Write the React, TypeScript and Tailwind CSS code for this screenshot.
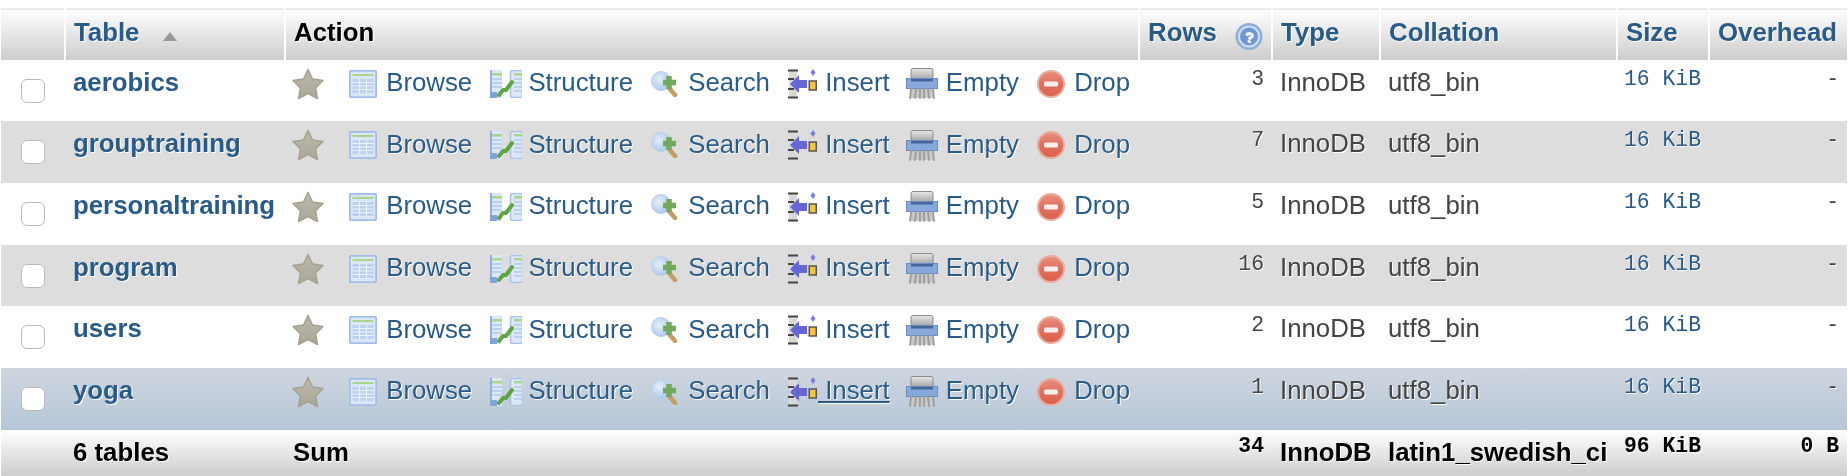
import type { ReactNode } from "react";

type TableRow = {
  name: string;
  rows: number;
};

const TABLE_ROWS: TableRow[] = [
  { name: "aerobics", rows: 3 },
  { name: "grouptraining", rows: 7 },
  { name: "personaltraining", rows: 5 },
  { name: "program", rows: 16 },
  { name: "users", rows: 2 },
  { name: "yoga", rows: 1 },
];

const StarIcon = () => (
  <svg className="h-8 w-8 shrink-0" viewBox="0 0 32 32">
    <defs>
      <linearGradient id="star-fill" x1="0" x2="0" y1="0" y2="1">
        <stop offset="0" stopColor="#bcb8aa" />
        <stop offset="1" stopColor="#aca898" />
      </linearGradient>
    </defs>
    <path
      d="M16 1.5 L20.5 11 L31 12.5 L23.5 20 L25.5 30.5 L16 25.5 L6.5 30.5 L8.5 20 L1 12.5 L11.5 11 Z"
      fill="url(#star-fill)"
      stroke="#a5a191"
      strokeLinejoin="round"
      strokeWidth="1.5"
    />
  </svg>
);

const BrowseIcon = () => (
  <svg className="h-7 w-7 shrink-0" viewBox="0 0 28 28">
    <rect fill="#dbe7f7" height="26.5" rx="2" stroke="#a3bee6" strokeWidth="2" width="26.5" x="0.75" y="0.75" />
    <rect fill="#a9d58f" height="2" width="21" x="3.5" y="4" />
    <rect fill="#bcd2ef" height="14" width="21" x="3.5" y="9" />
    <path d="M3.5 12.5h21M3.5 16h21M3.5 19.5h21M10.5 9v14M17.5 9v14" stroke="#eef4fc" strokeWidth="1.2" />
  </svg>
);

const StructureIcon = () => (
  <svg className="h-7 w-8 shrink-0" viewBox="0 0 32 28">
    <rect fill="#dde8f7" height="28" width="12" x="0" y="0" />
    <rect fill="#8fb0e0" height="28" width="2" x="0" y="0" />
    <rect fill="#a9d58f" height="2.5" width="10" x="2" y="3" />
    <path d="M2 9h10M2 13h10M2 17h10" stroke="#b3c9ea" strokeWidth="1.5" />
    <rect fill="#dde8f7" height="27" rx="2" stroke="#a9c3e8" strokeWidth="1.5" width="12" x="20.5" y="0.5" />
    <rect fill="#a9d58f" height="2.5" width="8" x="24" y="3" />
    <path d="M24 9h8M24 13h8M24 17h8M24 21h8" stroke="#b3c9ea" strokeWidth="1.5" />
    <rect fill="#7fa4dc" height="6" width="7" x="0" y="22" />
    <path d="M9 25 L13 20 L16 20 L22 12" fill="none" stroke="#5fa544" strokeLinecap="round" strokeLinejoin="round" strokeWidth="4" />
  </svg>
);

const SearchIcon = () => (
  <svg className="h-[26px] w-[27px] shrink-0" viewBox="0 0 27 26">
    <defs>
      <radialGradient id="lens-fill" cx="0.4" cy="0.4" r="0.65">
        <stop offset="0" stopColor="#e6eff9" />
        <stop offset="1" stopColor="#a9c6ea" />
      </radialGradient>
    </defs>
    <circle cx="10" cy="10" fill="url(#lens-fill)" r="9.5" stroke="#b8cfec" />
    <path d="M18 17 L24 24" stroke="#c49c66" strokeLinecap="round" strokeWidth="4.5" />
    <path d="M18 5v13M12 11.5h13" stroke="#72a95a" strokeWidth="5.5" />
  </svg>
);

const InsertIcon = () => (
  <svg className="h-[30px] w-[29px] shrink-0" viewBox="0 0 29 30">
    <rect fill="#d8d8d8" height="28" width="8" x="1" y="1" />
    <path d="M0 1.5h10M0 28.5h10M0 10h6M0 20h6" stroke="#444" strokeWidth="2" />
    <path d="M2 15 L11 6 L11 11 L19 11 L19 19 L11 19 L11 24 Z" fill="#6666d4" />
    <path d="M25 0 L27.5 3.5 L25 7 L22.5 3.5 Z" fill="#7d7de0" />
    <rect fill="#f3c44a" height="9" stroke="#555" strokeWidth="1.5" width="7" x="21.25" y="12" />
  </svg>
);

const EmptyIcon = () => (
  <svg className="h-[31px] w-8 shrink-0" viewBox="0 0 32 31">
    <defs>
      <linearGradient id="shredder-top" x1="0" x2="0" y1="0" y2="1">
        <stop offset="0" stopColor="#e8e8e8" />
        <stop offset="1" stopColor="#a2a2a2" />
      </linearGradient>
    </defs>
    <rect fill="url(#shredder-top)" height="11" rx="2" stroke="#8a8a8a" width="22" x="5" y="0.5" />
    <rect fill="#86a8da" height="10" stroke="#6a8cc2" width="31" x="0.5" y="10.5" />
    <rect fill="#456699" height="2.5" width="22" x="5" y="11" />
    <rect fill="#c8c8c8" height="9" width="24" x="4" y="21" />
    <path d="M5 21 L4 30 M10 21 L9 30 M14 21 L14 30 M18 21 L18 30 M22 21 L23 30 M27 21 L28 30" stroke="#9c9c9c" strokeLinecap="round" strokeWidth="1.8" />
  </svg>
);

const DropIcon = () => (
  <svg className="h-7 w-7 shrink-0" viewBox="0 0 28 28">
    <defs>
      <linearGradient id="drop-fill" x1="0" x2="0" y1="0" y2="1">
        <stop offset="0" stopColor="#e8907f" />
        <stop offset="0.5" stopColor="#e0705e" />
        <stop offset="1" stopColor="#dc604d" />
      </linearGradient>
    </defs>
    <circle cx="14" cy="14" fill="url(#drop-fill)" r="13" stroke="#e8ab9e" strokeWidth="2" />
    <rect fill="#f8efed" height="5" rx="1.5" width="14" x="7" y="11.5" />
  </svg>
);

const HelpIcon = () => (
  <svg className="mt-2 h-[29px] w-7 shrink-0" viewBox="0 0 28 29">
    <circle cx="14" cy="14.5" fill="#8dadda" r="13.5" />
    <circle cx="14" cy="14.5" fill="#cfddf0" r="11" />
    <circle cx="14" cy="14.5" fill="#6f98d4" r="9" />
    <text fill="#f0f4fa" fontFamily="Liberation Sans" fontSize="15" fontWeight="700" textAnchor="middle" x="14" y="20">
      ?
    </text>
  </svg>
);

const SortArrow = () => (
  <svg className="h-[9px] w-[14px] shrink-0" viewBox="0 0 14 9">
    <path d="M7 0 L14 9 L0 9 Z" fill="#999" />
  </svg>
);

const ActionLink = ({ icon, label, textOffset, hovered }: { icon: ReactNode; label: string; textOffset: string; hovered?: boolean }) => (
  <span className="flex h-9 shrink-0 items-center">
    {icon}
    <span className={`mb-[3px] leading-8 text-[#2a5a86] ${textOffset} ${hovered ? "underline" : ""}`}>{"\u00a0"}{label}</span>
  </span>
);

const HeaderCell = ({ children, dark, last }: { children: ReactNode; dark?: boolean; last?: boolean }) => (
  <th
    className={`bg-gradient-to-b from-white to-[#cccccc] px-2 pb-1 text-left align-middle font-bold leading-8 ${
      last ? "" : "border-r-2 border-white"
    } ${dark ? "text-black" : "text-[#2a5a86]"}`}
  >
    {children}
  </th>
);

const cell = "px-2 pt-[6px] align-top leading-8";
const monoCell = "px-2 pt-[9px] align-top font-['Liberation_Mono'] text-[21.4px] leading-5";

export default function App() {
  return (
    <div className="min-h-[476px] bg-white pl-px pt-2 font-['Liberation_Sans',sans-serif] text-[25.8px] blur-[0.4px] [text-shadow:1px_1px_0_#fff]">
      <table className="w-[1846px] table-fixed border-collapse">
        <colgroup>
          <col className="w-[64px]" />
          <col className="w-[220px]" />
          <col className="w-[854px]" />
          <col className="w-[133px]" />
          <col className="w-[108px]" />
          <col className="w-[237px]" />
          <col className="w-[92px]" />
          <col className="w-[138px]" />
        </colgroup>
        <thead>
          <tr className="h-[51px] border-t border-[#eeeeee]">
            <HeaderCell>&nbsp;</HeaderCell>
            <HeaderCell>
              <span className="flex items-center gap-6">
                Table
                <span className="mt-2">
                  <SortArrow />
                </span>
              </span>
            </HeaderCell>
            <HeaderCell dark>Action</HeaderCell>
            <HeaderCell>
              <span className="flex items-center justify-between">
                Rows
                <HelpIcon />
              </span>
            </HeaderCell>
            <HeaderCell>Type</HeaderCell>
            <HeaderCell>Collation</HeaderCell>
            <HeaderCell>Size</HeaderCell>
            <HeaderCell last>Overhead</HeaderCell>
          </tr>
        </thead>
        <tbody>
          {TABLE_ROWS.map((row, index) => {
            const hovered = row.name === "yoga";
            const background = hovered
              ? "bg-gradient-to-b from-[#ced6df] to-[#b6c6d7]"
              : index % 2 === 1
                ? "bg-[#dddddd]"
                : "bg-white";
            return (
              <tr className={`h-[61.7px] ${background} text-[#444444]`} key={row.name}>
                <td className="pl-5 pt-[19px] align-top">
                  <span className="block h-6 w-6 rounded-md border border-[#bbbbbb] bg-white" />
                </td>
                <td className={`${cell} font-bold text-[#2a5a86]`}>{row.name}</td>
                <td className="pl-[7px] pt-[6px] align-top">
                  <div className="flex items-center gap-4">
                    <span className="mr-[9px]">
                      <StarIcon />
                    </span>
                    <ActionLink icon={<BrowseIcon />} label="Browse" textOffset="ml-[2px] mr-[2px]" />
                    <ActionLink icon={<StructureIcon />} label="Structure" textOffset="-ml-px mr-[2px]" />
                    <ActionLink icon={<SearchIcon />} label="Search" textOffset="ml-[3px] mr-[2px]" />
                    <ActionLink hovered={hovered} icon={<InsertIcon />} label="Insert" textOffset="ml-px" />
                    <ActionLink icon={<EmptyIcon />} label="Empty" textOffset="ml-px mr-[2px]" />
                    <ActionLink icon={<DropIcon />} label="Drop" textOffset="ml-[2px]" />
                  </div>
                </td>
                <td className={`${monoCell} text-right`}>{row.rows}</td>
                <td className={cell}>InnoDB</td>
                <td className={cell}>utf8_bin</td>
                <td className={`${monoCell} whitespace-nowrap pl-[7px] pt-2 text-[#2a5a86]`}>16 KiB</td>
                <td className={`${monoCell} text-right`}>-</td>
              </tr>
            );
          })}
          <tr className="h-[47px] bg-gradient-to-b from-white to-[#cccccc] align-middle font-bold text-black">
            <td />
            <td className="px-2 pb-[2px] leading-8">6 tables</td>
            <td className="px-2 pb-[2px] leading-8">Sum</td>
            <td className="px-2 pb-[14px] text-right font-['Liberation_Mono'] text-[21.4px]">34</td>
            <td className="px-2 pb-[2px] leading-8">InnoDB</td>
            <td className="whitespace-nowrap px-2 pb-[2px] leading-8">latin1_swedish_ci</td>
            <td className="whitespace-nowrap py-0 pb-[14px] pl-[7px] font-['Liberation_Mono'] text-[21.4px]">96 KiB</td>
            <td className="px-2 pb-[14px] text-right font-['Liberation_Mono'] text-[21.4px]">0 B</td>
          </tr>
        </tbody>
      </table>
    </div>
  );
}
